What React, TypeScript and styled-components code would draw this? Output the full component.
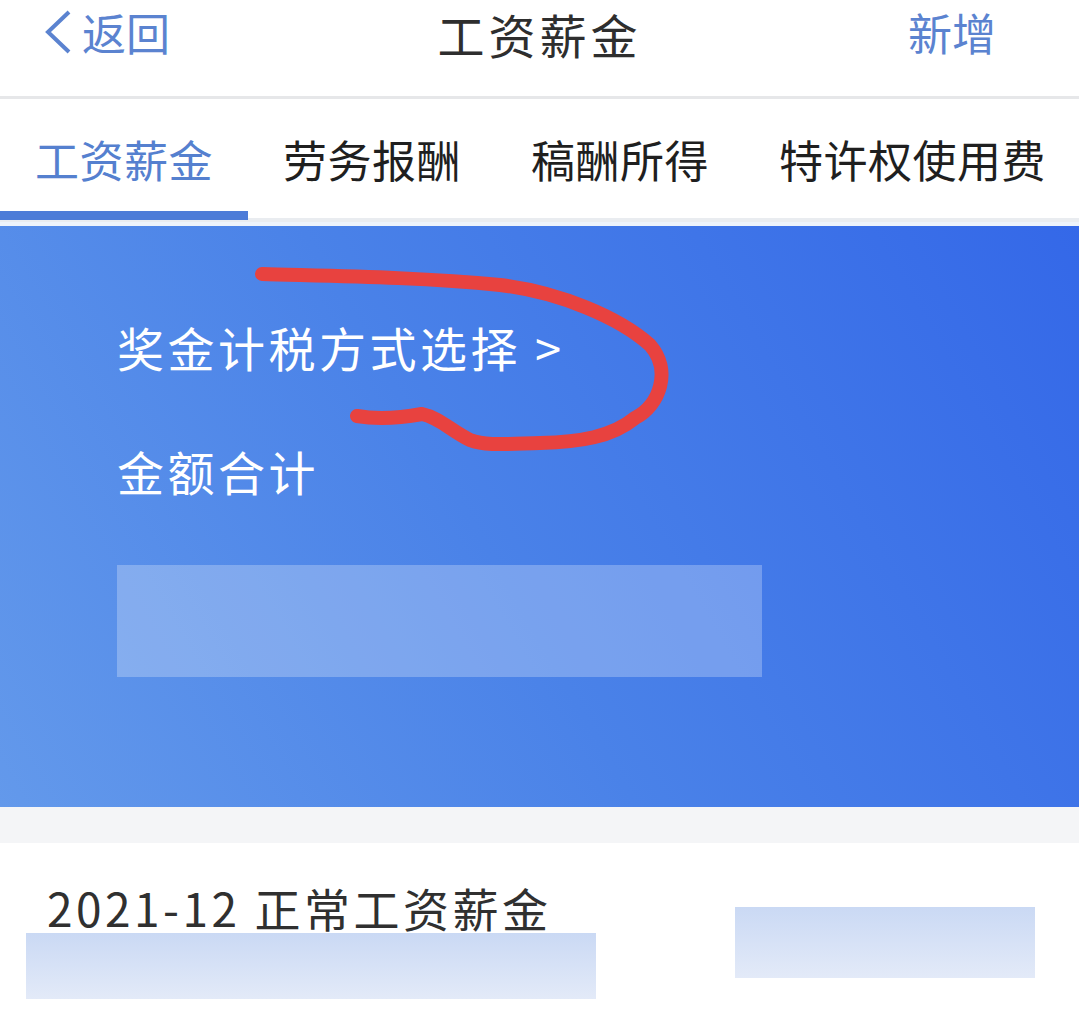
import React from "react";
import styled, { createGlobalStyle } from "styled-components";

const Global = createGlobalStyle`
  html, body { margin: 0; padding: 0; background: #ffffff; }
  body { font-family: "Noto Sans CJK SC", "Noto Sans", sans-serif; overflow: hidden; }
  * { box-sizing: border-box; }
`;

const Page = styled.div`
  width: 1079px;
  height: 1014px;
  display: flex;
  flex-direction: column;
  background: #ffffff;
  overflow: hidden;
`;

const NavBar = styled.header`
  height: 99px;
  flex: none;
  display: grid;
  grid-template-columns: 1fr auto 1fr;
  align-items: start;
  padding: 0 44px;
  border-bottom: 3px solid #e6e7e9;
`;

const BackButton = styled.div`
  display: flex;
  align-items: center;
  gap: 10px;
  color: #5b83d0;
  font-size: 44px;
  line-height: 64px;
`;

const Title = styled.h1`
  margin: 0;
  font-size: 47px;
  font-weight: 400;
  letter-spacing: 4px;
  line-height: 68px;
  color: #2e2e2e;
`;

const AddButton = styled.div`
  justify-self: end;
  margin-right: 39px;
  color: #5b83d0;
  font-size: 44px;
  line-height: 64px;
`;

const TabBar = styled.nav`
  height: 123px;
  flex: none;
  display: flex;
  border-bottom: 4px solid #e9ecf0;
`;

const Tab = styled.div<{ $active?: boolean }>`
  position: relative;
  height: 119px;
  display: flex;
  align-items: flex-start;
  padding: 28px 35px 0;
  font-size: 44px;
  line-height: 64px;
  letter-spacing: 0.5px;
  color: ${(p) => (p.$active ? "#5580cf" : "#1f1f1f")};
  white-space: nowrap;
`;

const TabLine = styled.span`
  position: absolute;
  left: 0;
  right: 0;
  bottom: -2px;
  height: 9px;
  background: #4d7cd8;
`;

const Gap = styled.div`
  height: 4px;
  flex: none;
  background: #edf3fb;
`;

const Hero = styled.section`
  position: relative;
  height: 581px;
  flex: none;
  display: flex;
  flex-direction: column;
  align-items: flex-start;
  padding: 88px 0 0 117px;
  background: linear-gradient(60deg, #6399eb 0%, #4a82e8 45%, #3468e8 100%);
  color: #ffffff;
`;

const HeroLine = styled.div`
  font-size: 47px;
  line-height: 66px;
  letter-spacing: 3.5px;
  color: #ffffff;
`;

const HeroLink = styled(HeroLine)`
  margin-bottom: 58px;
`;

const AmountMask = styled.div`
  margin-top: 61px;
  width: 645px;
  height: 112px;
  background: rgba(255, 255, 255, 0.26);
`;

const Scribble = styled.svg`
  position: absolute;
  left: 0;
  top: 0;
  pointer-events: none;
`;

const Divider = styled.div`
  height: 36px;
  flex: none;
  background: #f4f5f7;
`;

const RecordRow = styled.div`
  position: relative;
  flex: 1;
  padding: 31px 0 0 47px;
`;

const RecordTitle = styled.div`
  font-size: 46px;
  line-height: 66px;
  letter-spacing: 3.5px;
  color: #303030;
`;

const Mask = styled.div<{ $tone: "wide" | "narrow" }>`
  position: absolute;
  background: linear-gradient(180deg, #cad9f4 0%, #e3eaf8 100%);
  ${(p) =>
    p.$tone === "wide"
      ? "left: 26px; top: 90px; width: 570px; height: 66px;"
      : "left: 735px; top: 64px; width: 300px; height: 71px;"}
`;

const tabs = ["工资薪金", "劳务报酬", "稿酬所得", "特许权使用费"];

export default function App() {
  return (
    <Page>
      <Global />
      <NavBar>
        <BackButton>
          <svg width="28" height="44" viewBox="0 0 28 44">
            <path d="M25 2 L4 22 L25 42" fill="none" stroke="#5b83d0" strokeWidth="4" />
          </svg>
          <span>返回</span>
        </BackButton>
        <Title>工资薪金</Title>
        <AddButton>新增</AddButton>
      </NavBar>
      <TabBar>
        {tabs.map((t, i) => (
          <Tab key={t} $active={i === 0}>
            {t}
            {i === 0 && <TabLine />}
          </Tab>
        ))}
      </TabBar>
      <Gap />
      <Hero>
        <HeroLink>奖金计税方式选择 &gt;</HeroLink>
        <HeroLine>金额合计</HeroLine>
        <AmountMask />
        <Scribble width="1079" height="581" viewBox="0 226 1079 581">
          <path
            d="M262 274 C 330 276, 420 277, 500 285 C 560 292, 620 318, 650 345 C 672 370, 660 405, 635 418 C 612 437, 580 442, 540 443 C 505 444, 485 446, 470 440 C 450 430, 440 418, 422 414 C 400 418, 380 420, 357 416"
            fill="none"
            stroke="#e8423f"
            strokeWidth="14"
            strokeLinecap="round"
            strokeLinejoin="round"
          />
        </Scribble>
      </Hero>
      <Divider />
      <RecordRow>
        <RecordTitle>2021-12 正常工资薪金</RecordTitle>
        <Mask $tone="wide" />
        <Mask $tone="narrow" />
      </RecordRow>
    </Page>
  );
}
